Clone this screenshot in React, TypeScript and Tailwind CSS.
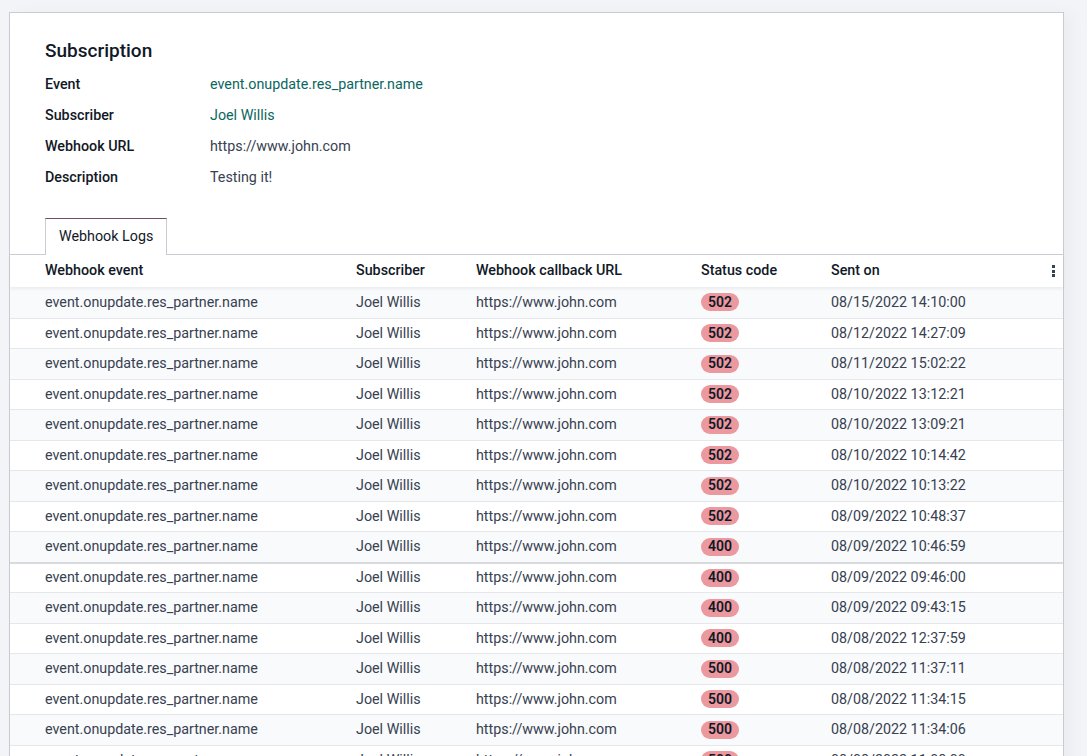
import React from 'react';

const rows: [string, string][] = [
  ['502', '08/15/2022 14:10:00'],
  ['502', '08/12/2022 14:27:09'],
  ['502', '08/11/2022 15:02:22'],
  ['502', '08/10/2022 13:12:21'],
  ['502', '08/10/2022 13:09:21'],
  ['502', '08/10/2022 10:14:42'],
  ['502', '08/10/2022 10:13:22'],
  ['502', '08/09/2022 10:48:37'],
  ['400', '08/09/2022 10:46:59'],
  ['400', '08/09/2022 09:46:00'],
  ['400', '08/09/2022 09:43:15'],
  ['400', '08/08/2022 12:37:59'],
  ['500', '08/08/2022 11:37:11'],
  ['500', '08/08/2022 11:34:15'],
  ['500', '08/08/2022 11:34:06'],
  ['500', '08/08/2022 11:08:00'],
];

const fields = [
  { label: 'Event', value: 'event.onupdate.res_partner.name', link: true },
  { label: 'Subscriber', value: 'Joel Willis', link: true },
  { label: 'Webhook URL', value: 'https://www.john.com', link: false },
  { label: 'Description', value: 'Testing it!', link: false },
];

const cols = 'grid grid-cols-[311px_120px_225px_130px_1fr_20px] items-center pl-[35px]';

export default function App() {
  return (
    <div
      className="h-[756px] overflow-hidden bg-[#f3f4f7] pt-3 pl-[9px] pr-[23px]"
      style={{ fontFamily: 'Roboto, "Liberation Sans", sans-serif' }}
    >
      <div className="border border-[#c8cbd1] bg-white shadow-[8px_0_14px_rgba(0,0,0,0.03)]">
        <div className="px-[35px] pt-[26px]">
          <h1 className="text-[19px] font-medium leading-[24px] text-[#111827]">Subscription</h1>
          <div className="mt-[6px] flex flex-col">
            {fields.map(f => (
              <div key={f.label} className="flex h-[31px] items-center text-[14.3px]">
                <span className="w-[165px] font-medium text-[#111827]">{f.label}</span>
                <span className={f.link ? 'text-[#0b6660]' : 'text-[#374151]'}>{f.value}</span>
              </div>
            ))}
          </div>
        </div>

        <div className="mt-[25px] flex border-b border-[#c8cbd1] pl-[35px]">
          <div className="-mb-px flex h-[37px] w-[122px] items-center border border-b-0 border-[#c8cbd1] border-t-[#714b67] bg-white pl-[13px] text-[14.3px] text-[#111827]">
            Webhook Logs
          </div>
        </div>

        <div className={`${cols} relative z-10 h-[32px] text-[14.3px] font-medium text-[#111827] shadow-[0_2px_3px_rgba(0,0,0,0.06)]`}>
          <span>Webhook event</span>
          <span>Subscriber</span>
          <span>Webhook callback URL</span>
          <span>Status code</span>
          <span>Sent on</span>
          <span className="flex flex-col items-center gap-[1.5px]">
            <span className="h-[3px] w-[3px] bg-[#374151]" />
            <span className="h-[3px] w-[3px] bg-[#374151]" />
            <span className="h-[3px] w-[3px] bg-[#374151]" />
          </span>
        </div>

        {rows.map(([code, date], i) => (
          <div
            key={i}
            className={`${cols} h-[30.5px] text-[14.3px] text-[#374151] ${i % 2 === 0 ? 'bg-[#f9fafb]' : 'bg-white'} ${
              i === 0 ? '' : i === 9 ? 'border-t-2 border-[#d8dadd]' : 'border-t border-[#e5e7eb]'
            }`}
          >
            <span>event.onupdate.res_partner.name</span>
            <span>Joel Willis</span>
            <span>https://www.john.com</span>
            <span>
              <span className="inline-flex h-[18px] w-[38px] items-center justify-center rounded-full bg-[#eb989f] text-[14px] font-semibold text-[#111827]">
                {code}
              </span>
            </span>
            <span>{date}</span>
            <span />
          </div>
        ))}
      </div>
    </div>
  );
}
